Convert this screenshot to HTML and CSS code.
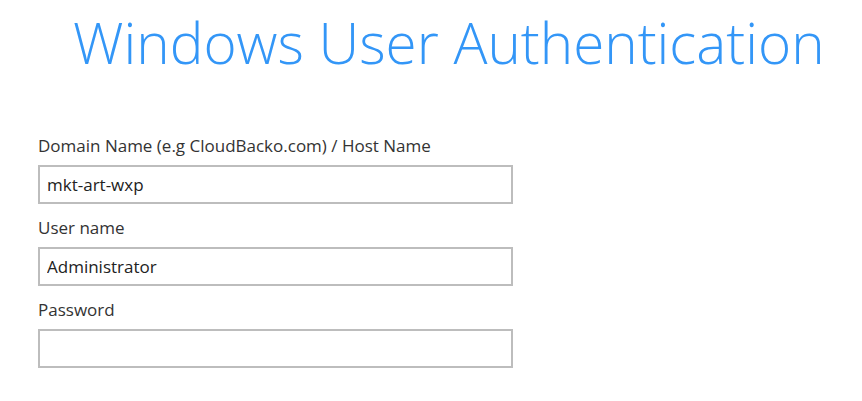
FILE: index.html
```html
<!DOCTYPE html>
<html lang="en">

<head>
    <meta charset="UTF-8">
    <title>Windows User Authentication</title>
    <link rel="stylesheet" href="styles.css">
</head>

<body>
    <h1 class="title">Windows User Authentication</h1>

    <form class="auth-form">
        <div class="field">
            <label for="domain">Domain Name (e.g CloudBacko.com) / Host Name</label>
            <input type="text" id="domain" value="mkt-art-wxp">
        </div>
        <div class="field">
            <label for="user">User name</label>
            <input type="text" id="user" value="Administrator">
        </div>
        <div class="field">
            <label for="password">Password</label>
            <input type="password" id="password">
        </div>
    </form>
</body>

</html>
```

FILE: styles.css
```css
body {
    margin: 0;
    padding: 0;
    background: #fff;
    font-family: "Open Sans", "Noto Sans", sans-serif;
    color: #333;
}

.title {
    margin: 0;
    padding: 15px 0 0 73px;
    font-size: 56.6px;
    line-height: 56px;
    font-weight: 300;
    color: #3396f7;
    white-space: nowrap;
}

.auth-form {
    margin-top: 64px;
    padding-left: 38px;
    display: flex;
    flex-direction: column;
    gap: 13px;
}

.field {
    display: flex;
    flex-direction: column;
    gap: 8px;
}

.field label {
    font-size: 17px;
    line-height: 22px;
    color: #333;
}

.field input {
    box-sizing: border-box;
    width: 475px;
    height: 39px;
    margin: 0;
    padding: 0 7px;
    border: 2px solid #bdbdbd;
    border-radius: 0;
    font-family: inherit;
    font-size: 17px;
    color: #222;
    outline: none;
}
```
